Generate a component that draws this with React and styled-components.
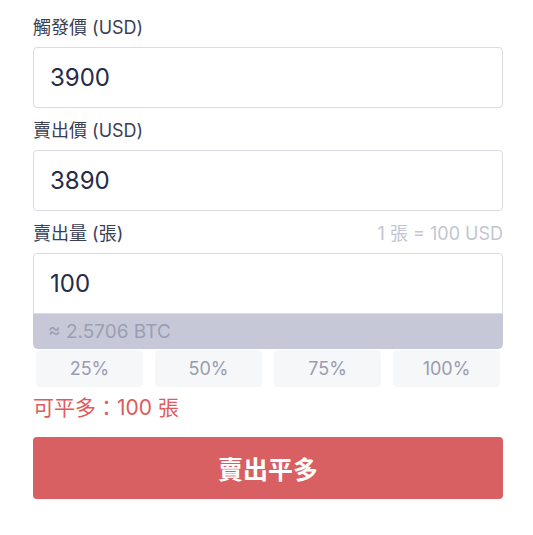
import React from "react";
import styled, { createGlobalStyle } from "styled-components";

const Global = createGlobalStyle`
  html, body { margin: 0; padding: 0; background: #ffffff; }
  body { font-family: Inter, "Noto Sans CJK TC", "Noto Sans", sans-serif; }
  * { box-sizing: border-box; }
`;

const Form = styled.div`
  width: 470px;
  margin-left: 33px;
  padding-top: 5px;
  display: flex;
  flex-direction: column;
`;

const LabelRow = styled.div`
  height: 42px;
  display: flex;
  align-items: center;
  justify-content: space-between;
`;

const Label = styled.span`
  font-size: 18px;
  color: #3b3f56;
`;

const Hint = styled.span`
  font-size: 18px;
  color: #c3c5d1;
`;

const InputBox = styled.div`
  height: 61px;
  border: 1px solid #dadce7;
  border-radius: ${(p) => (p.$attached ? "4px 4px 0 0" : "4px")};
  display: flex;
  align-items: center;
  padding: 0 16px;
  font-size: 24px;
  color: #252b48;
  background: #fff;
`;

const ConvertBar = styled.div`
  height: 35px;
  background: #c6c8d7;
  border-radius: 0 0 5px 5px;
  display: flex;
  align-items: center;
  padding: 0 15px;
  font-size: 19px;
  color: #9b9eb2;
`;

const PercentRow = styled.div`
  display: grid;
  grid-template-columns: repeat(4, 1fr);
  gap: 12px;
  padding: 1px 3px 0;
`;

const PercentButton = styled.div`
  height: 37px;
  background: #f6f7f9;
  border-radius: 4px;
  display: flex;
  align-items: center;
  justify-content: center;
  font-size: 18px;
  color: #9a9caf;
`;

const Available = styled.div`
  margin-top: 8px;
  line-height: 26px;
  font-size: 21px;
  color: #e05b5c;
`;

const SubmitButton = styled.div`
  margin-top: 16px;
  height: 62px;
  border-radius: 4px;
  background: #d86062;
  color: #ffffff;
  font-size: 25px;
  font-weight: 700;
  display: flex;
  align-items: center;
  justify-content: center;
`;

export default function App() {
  return (
    <>
      <Global />
      <Form>
        <LabelRow>
          <Label>觸發價 (USD)</Label>
        </LabelRow>
        <InputBox>3900</InputBox>
        <LabelRow>
          <Label>賣出價 (USD)</Label>
        </LabelRow>
        <InputBox>3890</InputBox>
        <LabelRow>
          <Label>賣出量 (張)</Label>
          <Hint>1 張 = 100 USD</Hint>
        </LabelRow>
        <InputBox $attached>100</InputBox>
        <ConvertBar>≈ 2.5706 BTC</ConvertBar>
        <PercentRow>
          {["25%", "50%", "75%", "100%"].map((p) => (
            <PercentButton key={p}>{p}</PercentButton>
          ))}
        </PercentRow>
        <Available>可平多：100 張</Available>
        <SubmitButton>賣出平多</SubmitButton>
      </Form>
    </>
  );
}
